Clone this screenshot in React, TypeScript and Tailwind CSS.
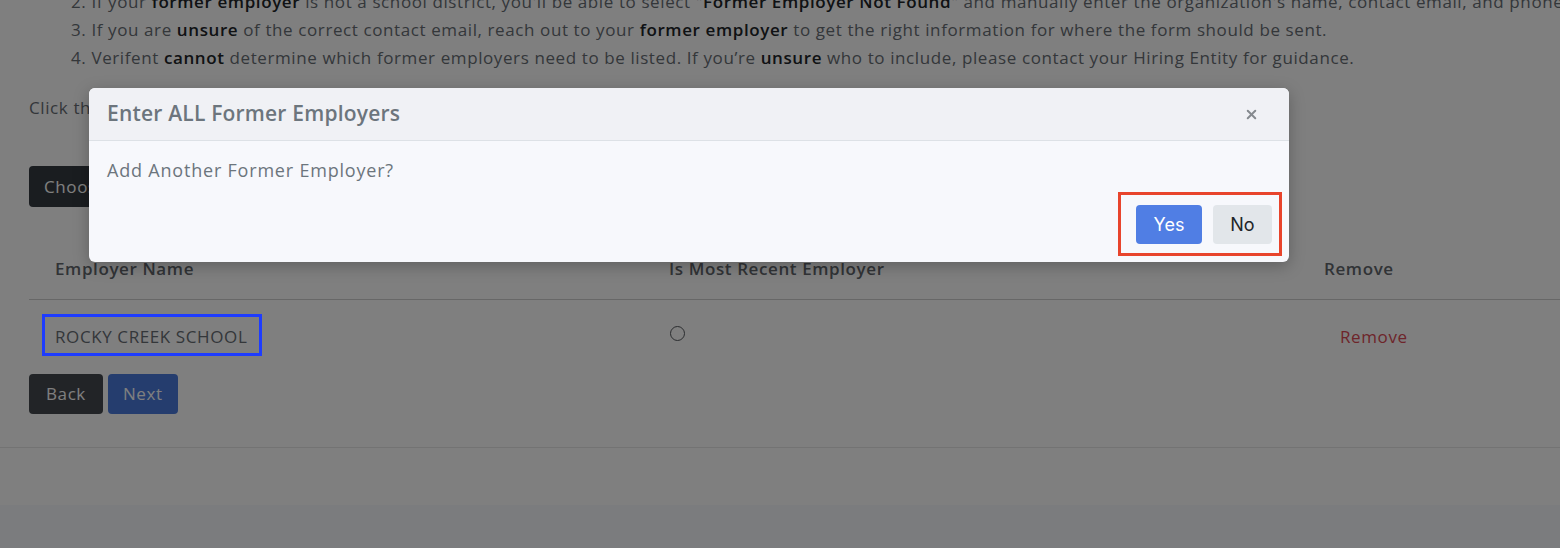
import { X } from "lucide-react";

const font = { fontFamily: '"Open Sans", "Liberation Sans", sans-serif' };

function Page() {
  return (
    <div className="flex h-full flex-col bg-white text-[17px] tracking-[0.6px] text-[#686e75]">
      <div className="border-b border-[#e6e6e6] pb-[33px] pl-[29px]">
        <div className="-mt-[12px] pl-[42px] leading-[28px]">
          <p className="whitespace-nowrap">
            2. If your <b className="font-semibold text-[#212529]">former employer</b> is not a school district, you'll be able to select "
            <b className="font-semibold text-[#212529]">Former Employer Not Found</b>" and manually enter the organization's name, contact email, and phone number.
          </p>
          <p className="whitespace-nowrap">
            3. If you are <b className="font-semibold text-[#212529]">unsure</b> of the correct contact email, reach out to your{" "}
            <b className="font-semibold text-[#212529]">former employer</b> to get the right information for where the form should be sent.
          </p>
          <p className="whitespace-nowrap">
            4. Verifent <b className="font-semibold text-[#212529]">cannot</b> determine which former employers need to be listed. If you’re{" "}
            <b className="font-semibold text-[#212529]">unsure</b> who to include, please contact your Hiring Entity for guidance.
          </p>
        </div>
        <p className="mt-[22px] leading-[28px]">Click the button below to search for and add each of your former employers.</p>
        <button className="mt-[44px] h-[41px] rounded-[4px] bg-[#343a40] px-[15px] text-white">
          Choose Former Employer
        </button>
        <div className="mt-[49px] grid grid-cols-[614px_655px_1fr] border-b border-[#cfcfcf] pb-[17px] font-semibold text-[#62676d]">
          <div className="pl-[26px]">Employer Name</div>
          <div className="pl-[26px]">Is Most Recent Employer</div>
          <div className="pl-[26px]">Remove</div>
        </div>
        <div className="grid h-[74px] grid-cols-[614px_655px_1fr] items-center">
          <div className="pl-[26px]">ROCKY CREEK SCHOOL</div>
          <div className="pl-[27px]">
            <span className="-mt-[6px] block h-[15px] w-[15px] rounded-full border border-[#55595e]" />
          </div>
          <div className="pl-[42px] text-[#dc4a55]">Remove</div>
        </div>
        <div className="flex gap-[5px]">
          <button className="h-[40px] rounded-[4px] bg-[#44494f] px-[17px] text-white">Back</button>
          <button className="h-[40px] rounded-[4px] bg-[#4a7adc] px-[15px] text-white">Next</button>
        </div>
      </div>
      <div className="h-[57px] shrink-0 bg-white" />
      <div className="flex-1 bg-[#f6f8fc]" />
    </div>
  );
}

export default function App() {
  return (
    <div className="relative h-[548px] w-[1560px] overflow-hidden" style={font}>
      <Page />
      <div className="absolute inset-0 bg-black/50" />
      <div className="absolute left-[89px] top-[88px] w-[1200px] overflow-hidden rounded-[6px] bg-[#f7f8fc] shadow-[0_4px_16px_rgba(0,0,0,0.25)]">
        <div className="flex h-[53px] items-center justify-between border-b border-[#dde1e6] bg-[#f0f1f5] pl-[18px] pr-[30px]">
          <h2 className="text-[21px] font-semibold tracking-[0.2px] text-[#6c757d]">Enter ALL Former Employers</h2>
          <X className="h-[15px] w-[15px] text-[#85898e]" strokeWidth={3.2} />
        </div>
        <div className="px-[18px] pt-[16px] text-[18px] leading-[26px] tracking-[0.8px] text-[#6c757d]">
          Add Another Former Employer?
        </div>
        <div className="flex justify-end gap-[11px] pb-[18px] pr-[17px] pt-[22px]">
          <button className="h-[39px] w-[66px] rounded-[4px] bg-[#507ee4] text-[18px] text-white" style={{ fontFamily: "Inter, sans-serif" }}>
            Yes
          </button>
          <button className="h-[39px] w-[59px] rounded-[4px] bg-[#e2e6ea] text-[18px] text-[#212529]" style={{ fontFamily: "Inter, sans-serif" }}>
            No
          </button>
        </div>
      </div>
      {/* annotation boxes */}
      <div className="absolute left-[1118px] top-[192px] h-[64px] w-[164px] border-[3px] border-[#e8442c]" />
      <div className="absolute left-[42px] top-[314px] h-[42px] w-[220px] border-[3px] border-[#1e3cff]" />
    </div>
  );
}
